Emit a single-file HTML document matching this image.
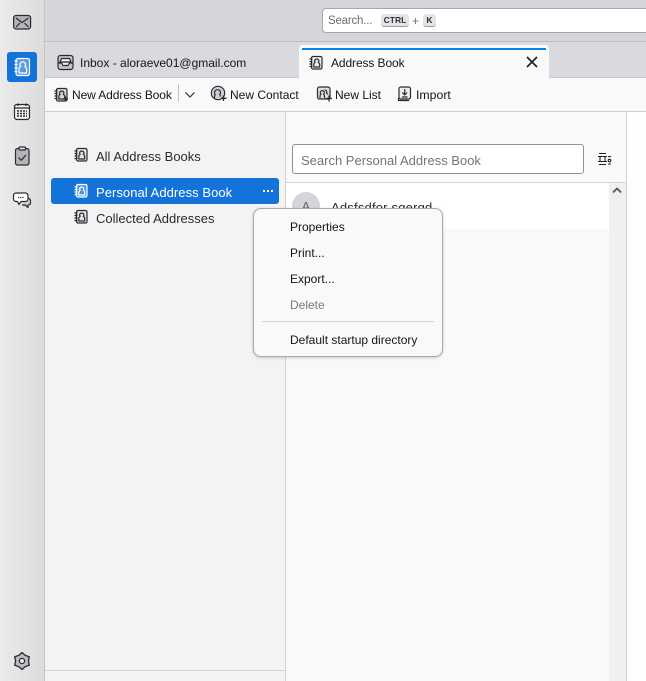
<!DOCTYPE html>
<html><head><meta charset="utf-8"><style>
*{box-sizing:border-box}
html,body{margin:0;padding:0;width:646px;height:681px;overflow:hidden;background:#f9f9f9}
body{font-family:"Liberation Sans",sans-serif;font-size:13px;color:#15141a;position:relative}
.a{position:absolute}
.t{position:absolute;white-space:nowrap;line-height:16px}
svg.i{position:absolute;overflow:visible;fill:none;stroke:#2b2a33;stroke-width:1.1;stroke-linejoin:round}
</style></head><body>
<div class="a" style="left:45px;top:0;width:601px;height:41px;background:#d5d5da"></div>
<div class="a" style="left:45px;top:41px;width:601px;height:1px;background:#bdbdc2"></div>
<div class="a" style="left:45px;top:42px;width:601px;height:35px;background:#d9d9de"></div>
<div class="a" style="left:45px;top:77px;width:601px;height:1px;background:#c8c8cc"></div>
<div class="a" style="left:45px;top:78px;width:601px;height:33px;background:#f9f9f9"></div>
<div class="a" style="left:45px;top:111px;width:601px;height:1px;background:#cfcfd3"></div>
<div class="a" style="left:0;top:0;width:45px;height:681px;background:linear-gradient(90deg,#ebebeb,#dcdcdc);border-right:1px solid #c4c4c4"></div>
<div class="a" style="left:45px;top:112px;width:241px;height:569px;background:#f3f3f3;border-right:1px solid #d0d0d3"></div>
<div class="a" style="left:45px;top:670px;width:240px;height:1px;background:#d5d5d8"></div>
<div class="a" style="left:286px;top:182px;width:340px;height:1px;background:#d5d5d8"></div>
<div class="a" style="left:286px;top:183px;width:323px;height:46px;background:#fff"></div>
<div class="a" style="left:609px;top:183px;width:17px;height:498px;background:#f0f0f0"></div>
<div class="a" style="left:626px;top:112px;width:1px;height:569px;background:#d5d5d8"></div>
<div class="a" style="left:627px;top:112px;width:19px;height:569px;background:#fdfdfd"></div>

<div class="a" style="left:322px;top:8px;width:330px;height:25px;background:#fff;border:1px solid #a5a5aa;border-radius:4px"></div>
<div class="t" style="left:328px;top:13px;color:#6d6d75;font-size:11.5px;letter-spacing:-.2px">Search...</div>
<div class="a" style="left:381px;top:14px;width:28px;height:13px;background:#e3e3e8;border-radius:3px;border-bottom:1px solid #9a9aa0;font:bold 8.5px/13px 'Liberation Sans',sans-serif;text-align:center;color:#333">CTRL</div>
<div class="t" style="left:412px;top:13px;color:#6d6d75;font-size:12px">+</div>
<div class="a" style="left:423px;top:14px;width:13px;height:13px;background:#e3e3e8;border-radius:3px;border-bottom:1px solid #9a9aa0;font:bold 8.5px/13px 'Liberation Sans',sans-serif;text-align:center;color:#333">K</div>

<div class="a" style="left:299px;top:45px;width:250px;height:33px;background:#f9f9f9;border-radius:4px 4px 0 0"></div>
<div class="a" style="left:302px;top:48px;width:244px;height:2px;background:#0a84e0"></div>
<div class="t" style="left:80px;top:55px;font-size:12px">Inbox - aloraeve01@gmail.com</div>
<div class="t" style="left:331px;top:55px;font-size:12px;letter-spacing:-.1px">Address Book</div>
<svg class="i" style="left:526px;top:56px;stroke-width:1.7;stroke:#222" width="12" height="12"><path d="M1 1L11 11M11 1L1 11"/></svg>

<div class="t" style="left:72px;top:87px;font-size:12px;letter-spacing:-.1px">New Address Book</div>
<div class="a" style="left:178px;top:84px;width:1px;height:18px;background:#c5c5c9"></div>
<svg class="i" style="left:185px;top:92px;stroke-width:1.2" width="11" height="6"><path d="M.5 .5L5 5L9.500 .5"/></svg>
<div class="t" style="left:230px;top:87px;font-size:12px">New Contact</div>
<div class="t" style="left:335px;top:87px;font-size:12px">New List</div>
<div class="t" style="left:416px;top:87px;font-size:12.3px">Import</div>

<div class="a" style="left:7px;top:52px;width:30px;height:30px;background:#1373d9;border-radius:3px"></div>
<svg class="i" style="left:0;top:0;stroke-width:1.2" width="45" height="681">
<rect x="13.600" y="15.500" width="17" height="13.500" rx="2.500" fill="#b4b4b6"/><path d="M16 18L22 22.500L28.500 18M16 27L20 23M28.500 27L24.500 23"/>
<g stroke="#fff"><rect x="16" y="58.500" width="13.500" height="17" rx="2" fill="#5d9be3"/><path d="M19 73v-4c0-1.200.8-2 1.800-2.500-.5-.5-.8-1.100-.8-1.800a2.800 2.800 0 015.600 0c0 .7-.3 1.300-.8 1.800 1 .5 1.800 1.300 1.800 2.500v4z"/><path d="M14.500 61h3M14.500 64.500h3M14.500 68h3M14.500 71.500h3"/></g>
<rect x="14.500" y="104.500" width="15" height="15" rx="2.500" fill="#f2f2f2"/><path d="M14.500 108h15M18 103.500v2.500M26 103.500v2.500" stroke-width="1.300"/><path d="M17 111h10M17 113.500h10M17 116h10" stroke-dasharray="2 1" stroke-width="1.500"/>
<rect x="15.500" y="148.500" width="13.500" height="16.500" rx="2" fill="#b4b4b6"/><rect x="19" y="147" width="6.500" height="3" rx="1" fill="#e0e0e0"/><path d="M18.500 157.500l2.800 2.800 4.500-5.300"/>
<path d="M26.500 198c2.500 .3 4 1.200 4 2.500v2.500c0 1.300-1 2-2.500 2v2.500l-3-2.500h-3" fill="#d0d0d0"/>
<path d="M16 193h9.500a2.500 2.500 0 012.500 2.500v3.500a2.500 2.500 0 01-2.500 2.500h-4.500l-2 3-1.500-3H16a2.500 2.500 0 01-2.500-2.500v-3.500A2.500 2.500 0 0116 193z" fill="#fff"/><path d="M18 197.500h6" stroke-dasharray="1.200 1"/>
<path d="M22 652.500L25.200 655.400 29.300 656.800 28.400 661 29.300 665.200 25.200 666.600 22 669.500 18.800 666.600 14.700 665.200 15.600 661 14.700 656.800 18.800 655.400Z" fill="#bdbdbf" stroke-width="1.300"/><circle cx="22" cy="661" r="2.600" fill="#eee" stroke-width="1.300"/>
</svg>

<svg width="0" height="0" style="position:absolute"><defs>
<g id="bk"><rect x="2.500" y=".5" width="10.500" height="12.500" rx="1.500"/><path d="M4.800 11V8.500c0-1 .6-1.700 1.400-2.100-.4-.4-.6-1-.6-1.600a2.200 2.200 0 014.300 0c0 .6-.2 1.200-.6 1.600.8.400 1.400 1.100 1.400 2.100V11z"/><path d="M.5 3h3M.5 5.500h3M.5 8h3M.5 10.500h3"/></g>
</defs></svg>

<svg class="i" style="left:0;top:0;stroke-width:1.200" width="646" height="230">
<rect x="58" y="55.500" width="15" height="14" rx="2.500" fill="#c4c4c8"/><path d="M58 63h3.500l1.500 2.500h5l1.500-2.500H73M61.500 58.500h8L71 62H60z" fill="#eee"/>
<use href="#bk" x="309" y="56" fill="#ececef"/>
<use href="#bk" x="54" y="88" fill="#d5d5d8"/><path d="M65.500 96.500v5M63 99h5" stroke-width="1.300"/>
<circle cx="218" cy="93" r="6.700" fill="#d0d0d4"/><path d="M214.500 98.500v-2a3 3 0 01.800-2c-.5-.5-.8-1.100-.8-1.800a3 3 0 016 0c0 .7-.3 1.300-.8 1.800.5.500.8 1.200.8 2"/><path d="M223.500 95.500v5.500M221 98.300h5.500" stroke-width="1.300"/>
<rect x="317.500" y="87" width="12.500" height="12" rx="2" fill="#e0e0e3"/><path d="M320 98v-2c0-1 .5-1.500 1-1.800a2 2 0 112.500 0c.5.300 1 .8 1 1.800v2M324.500 90a2 2 0 012 3c.5.300 1 .8 1 1.500"/><path d="M329 95.500v6M326 98.500h6" stroke-width="1.300"/>
<rect x="399" y="87" width="11.500" height="12" rx="2" fill="#eee"/><path d="M404.700 89v5.500M402.300 92.500l2.400 2.400 2.400-2.400M402 97h5.500"/><path d="M398.500 98v2.500h10.500"/>
<use href="#bk" x="74" y="148" fill="#e3e3e6"/>
<use href="#bk" x="74" y="210" fill="#e3e3e6"/>
</svg>

<div class="t" style="left:96px;top:149px;color:#2b2a33">All Address Books</div>
<div class="a" style="left:51px;top:178px;width:228px;height:26px;background:#1373d9;border-radius:3px"></div>
<svg class="i" style="left:0;top:0;stroke:#fff;stroke-width:1.200" width="300" height="210"><use href="#bk" x="74" y="184" fill="#4d94e3"/><path d="M263 191h2M267 191h2M271 191h2" stroke-width="2"/></svg>
<div class="t" style="left:96px;top:185px;letter-spacing:.05px;color:#fff">Personal Address Book</div>
<div class="t" style="left:96px;top:211px;color:#2b2a33">Collected Addresses</div>

<div class="a" style="left:292px;top:144px;width:292px;height:30px;background:#fff;border:1px solid #8f8f96;border-radius:3px"></div>
<div class="t" style="left:301px;top:153px;color:#73737b">Search Personal Address Book</div>
<svg class="i" style="left:598px;top:153px;stroke:#222" width="13" height="13"><path d="M1 .5h7M0 3.500h9M1 11.500h7M0 8.500h9M2 3.500v5M7 3.500v5M10 3.500h3M10 11h3"/><circle cx="11.500" cy="7.500" r="1.300"/></svg>
<svg class="i" style="left:612px;top:187px;stroke:#55555a;stroke-width:1.800" width="11" height="7"><path d="M1 5.500L5 1.500L9 5.500"/></svg>
<div class="a" style="left:292px;top:192px;width:28px;height:28px;border-radius:50%;background:#d4d4d9;color:#666;text-align:center;line-height:30px">A</div>
<div class="t" style="left:331px;top:200px;letter-spacing:.2px;color:#2b2a33">Adsfsdfor sgergd</div>

<div class="a" style="left:253px;top:208px;width:190px;height:149px;background:#f9f9f9;border:1px solid #a8a8ae;border-radius:8px;box-shadow:0 1px 3px rgba(0,0,0,.18)"></div>
<div class="a" style="left:262px;top:321px;width:172px;height:1px;background:#d5d5d8"></div>
<div class="t" style="left:290px;top:219px;font-size:12px">Properties</div>
<div class="t" style="left:290px;top:245px;font-size:12px">Print...</div>
<div class="t" style="left:290px;top:271px;font-size:12px">Export...</div>
<div class="t" style="left:290px;top:297px;font-size:12px;color:#77777e">Delete</div>
<div class="t" style="left:290px;top:332px;font-size:12px">Default startup directory</div>
</body></html>
